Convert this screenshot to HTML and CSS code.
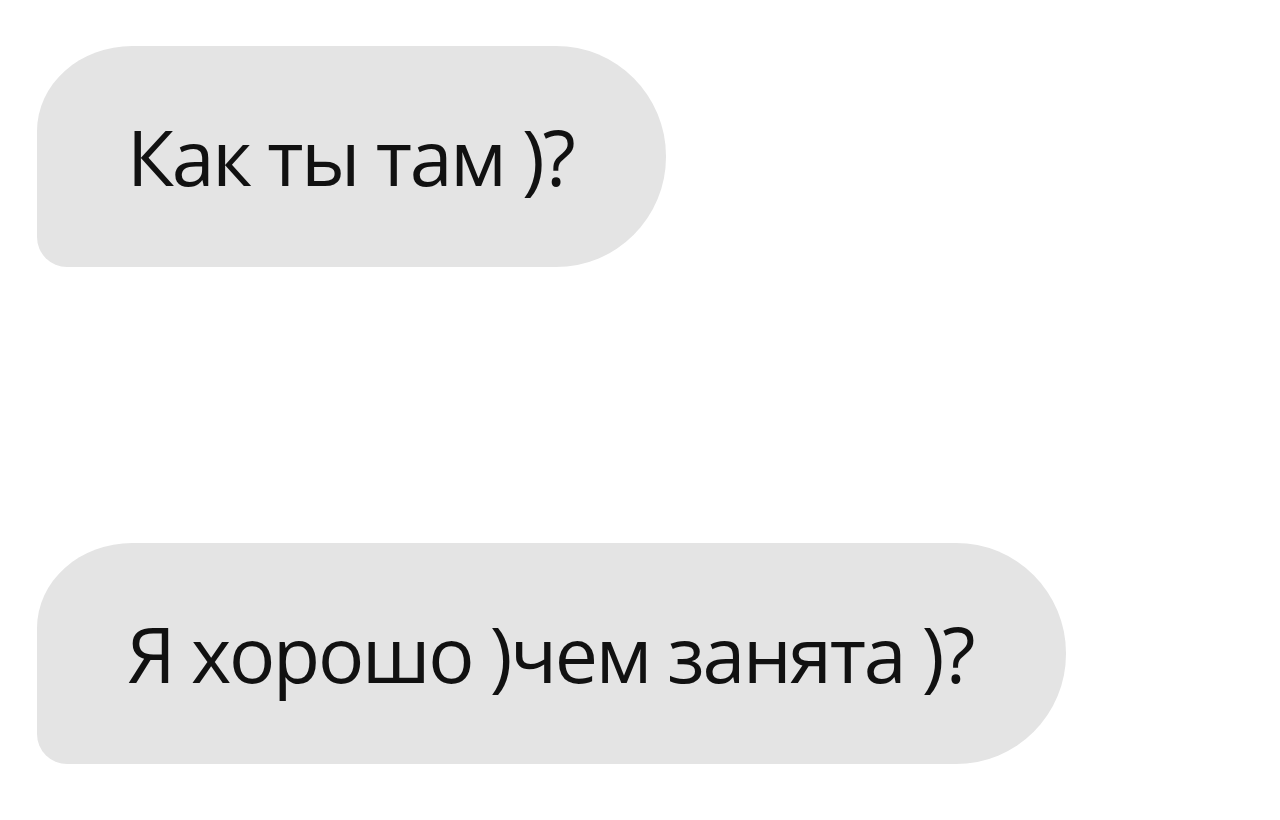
FILE: index.html
```html
<!DOCTYPE html>
<html>
<head>
<meta charset="utf-8">
<link rel="stylesheet" href="styles.css">
</head>
<body>
<div class="chat">
	<div class="bubble">Как ты там )?</div>
	<div class="bubble">Я хорошо )чем занята )?</div>
</div>
</body>
</html>
```

FILE: styles.css
```css
body {margin:0;
	background:#ffffff;
	font-family:"Open Sans", "Lato", sans-serif;}
.chat {display:flex;
	flex-direction:column;
	align-items:flex-start;
	gap:276px;
	padding:46px 0 0 37px;}
.bubble {display:flex;
	align-items:center;
	height:221px;
	padding:0 93px 0 90px;
	background:#e4e4e4;
	color:#111111;
	font-size:77px;
	letter-spacing:-2.3px;
	line-height:1;
	border-radius:95px 110px 110px 30px / 85px 110px 110px 30px;}
```
